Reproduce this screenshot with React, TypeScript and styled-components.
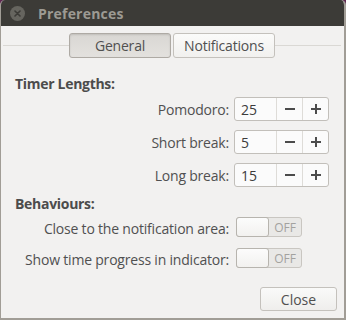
import { FunctionComponent } from "react";
import styled, { createGlobalStyle } from "styled-components";

const GlobalStyle = createGlobalStyle`
  html, body {
    margin: 0;
    padding: 0;
    background: #5e2750;
  }
  body {
    font-family: "Open Sans", "DejaVu Sans", sans-serif;
  }
`;

const Window = styled.div`
  width: 346px;
  height: 320px;
  box-sizing: border-box;
  display: flex;
  flex-direction: column;
  background: #f2f1f0;
  border-left: 1px solid #a19d96;
  border-right: 2px solid #a19d96;
  border-bottom: 2px solid #a19d96;
  border-radius: 5px 5px 0 0;
  overflow: hidden;
`;

const TitleBar = styled.div`
  height: 26px;
  flex-shrink: 0;
  display: flex;
  align-items: center;
  padding-left: 9px;
  gap: 13px;
  background: #3c3b37;
`;

const CloseDot = styled.div`
  width: 15px;
  height: 15px;
  border-radius: 50%;
  background: #66655f;
  display: flex;
  align-items: center;
  justify-content: center;
`;

const Title = styled.span`
  font-size: 14px;
  font-weight: 700;
  color: #9c9a93;
  letter-spacing: 0.2px;
`;

const Body = styled.div`
  flex: 1;
  display: flex;
  flex-direction: column;
  padding: 7px 3px 0 2px;
`;

const TabRow = styled.div`
  display: flex;
  align-items: center;
`;

const TabLine = styled.div`
  flex: 1;
  height: 1px;
  background: #dad8d4;
`;

const Tab = styled.div<{ $active?: boolean }>`
  width: 102px;
  height: 25px;
  box-sizing: border-box;
  display: flex;
  align-items: center;
  justify-content: center;
  font-size: 14px;
  letter-spacing: -0.2px;
  color: #505050;
  border: 1px solid ${(p) => (p.$active ? "#aeaaa4" : "#c4c1bc")};
  border-radius: 3px;
  background: ${(p) =>
    p.$active
      ? "linear-gradient(#d9d7d3, #e3e1de)"
      : "linear-gradient(#fbfbfa, #f1f0ee)"};
  box-shadow: ${(p) =>
    p.$active ? "inset 0 1px 2px rgba(0,0,0,0.12)" : "none"};
`;

const Content = styled.div`
  display: flex;
  flex-direction: column;
  padding: 16px 0 0 12px;
`;

const SectionTitle = styled.div<{ $gap?: number }>`
  font-size: 14px;
  font-weight: 700;
  letter-spacing: -0.3px;
  color: #4c4c4c;
  line-height: 19px;
  margin-top: ${(p) => p.$gap ?? 0}px;
`;

const Grid = styled.div`
  display: grid;
  grid-template-columns: 214px auto;
  column-gap: 5px;
  align-items: center;
`;

const Label = styled.div`
  font-size: 14px;
  letter-spacing: -0.2px;
  color: #505050;
  text-align: right;
  white-space: nowrap;
`;

const Spin = styled.div`
  width: 95px;
  height: 24px;
  box-sizing: border-box;
  display: flex;
  border: 1px solid #c2bfba;
  border-radius: 3px;
  background: #fbfbfb;
  margin: 4px 0 5px 0;
`;

const SpinValue = styled.div`
  width: 41px;
  display: flex;
  align-items: center;
  padding-left: 6px;
  box-sizing: border-box;
  font-size: 14px;
  color: #3c3c3c;
`;

const SpinButton = styled.div`
  flex: 1;
  display: flex;
  align-items: center;
  justify-content: center;
  border-left: 1px solid #dedcd8;
`;

const Switch = styled.div`
  width: 66px;
  height: 20px;
  box-sizing: border-box;
  display: flex;
  border: 1px solid #c9c6c1;
  border-radius: 3px;
  background: #e9e8e6;
  margin: 4px 0 7px 2px;
`;

const Knob = styled.div`
  width: 31px;
  margin: -1px 0 -1px -1px;
  border: 1px solid #b7b4ae;
  border-radius: 3px;
  background: linear-gradient(#fcfcfc, #f2f1ef);
`;

const SwitchText = styled.div`
  flex: 1;
  display: flex;
  align-items: center;
  justify-content: center;
  font-size: 12px;
  color: #a3a29f;
`;

const Footer = styled.div`
  margin-top: auto;
  display: flex;
  justify-content: flex-end;
  padding: 0 4px 7px 0;
`;

const Button = styled.div`
  width: 77px;
  height: 24px;
  box-sizing: border-box;
  display: flex;
  align-items: center;
  justify-content: center;
  font-size: 14px;
  color: #505050;
  border: 1px solid #c4c1bc;
  border-radius: 3px;
  background: linear-gradient(#fafaf9, #efeeec);
`;

const Minus = () => (
  <svg width="12" height="12" viewBox="0 0 12 12">
    <rect x="1" y="5" width="10" height="2" fill="#4c4c4c" />
  </svg>
);

const Plus = () => (
  <svg width="12" height="12" viewBox="0 0 12 12">
    <rect x="1" y="5" width="10" height="2" fill="#4c4c4c" />
    <rect x="5" y="1" width="2" height="10" fill="#4c4c4c" />
  </svg>
);

const SpinRow: FunctionComponent<{ label: string; value: number }> = ({
  label,
  value,
}) => (
  <>
    <Label>{label}</Label>
    <Spin>
      <SpinValue>{value}</SpinValue>
      <SpinButton>
        <Minus />
      </SpinButton>
      <SpinButton>
        <Plus />
      </SpinButton>
    </Spin>
  </>
);

const SwitchRow: FunctionComponent<{ label: string }> = ({ label }) => (
  <>
    <Label>{label}</Label>
    <Switch>
      <Knob />
      <SwitchText>OFF</SwitchText>
    </Switch>
  </>
);

const App: FunctionComponent = () => {
  return (
    <>
      <GlobalStyle />
      <Window>
        <TitleBar>
          <CloseDot>
            <svg width="7" height="7" viewBox="0 0 7 7">
              <path
                d="M1 1 L6 6 M6 1 L1 6"
                stroke="#3c3b37"
                strokeWidth="1.6"
                strokeLinecap="round"
              />
            </svg>
          </CloseDot>
          <Title>Preferences</Title>
        </TitleBar>
        <Body>
          <TabRow>
            <TabLine />
            <Tab $active>General</Tab>
            <Tab style={{ marginLeft: 2 }}>Notifications</Tab>
            <TabLine />
          </TabRow>
          <Content>
            <SectionTitle>Timer Lengths:</SectionTitle>
            <Grid>
              <SpinRow label="Pomodoro:" value={25} />
              <SpinRow label="Short break:" value={5} />
              <SpinRow label="Long break:" value={15} />
            </Grid>
            <SectionTitle $gap={2}>Behaviours:</SectionTitle>
            <Grid>
              <SwitchRow label="Close to the notification area:" />
              <SwitchRow label="Show time progress in indicator:" />
            </Grid>
          </Content>
          <Footer>
            <Button>Close</Button>
          </Footer>
        </Body>
      </Window>
    </>
  );
};

export default App;
